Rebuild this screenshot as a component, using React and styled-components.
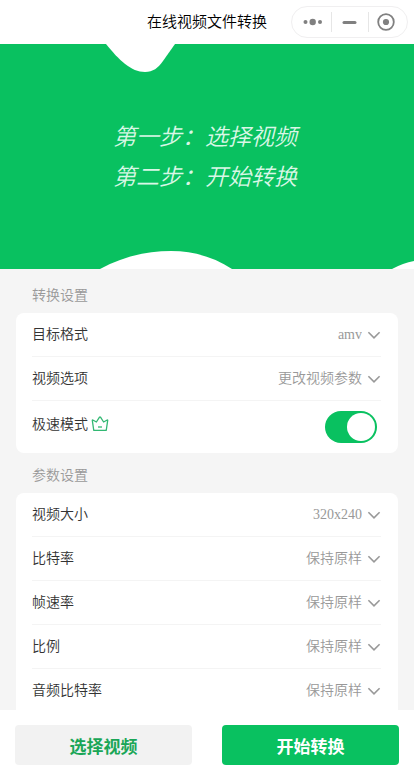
import React, { useState } from 'react';
import styled, { createGlobalStyle } from 'styled-components';

const convertList = [
  { id: 'format', label: '目标格式', value: 'amv' },
  { id: 'option', label: '视频选项', value: '更改视频参数' },
];

const paramList = [
  { id: 'size', label: '视频大小', value: '320x240' },
  { id: 'bitrate', label: '比特率', value: '保持原样' },
  { id: 'fps', label: '帧速率', value: '保持原样' },
  { id: 'ratio', label: '比例', value: '保持原样' },
  { id: 'audioBitrate', label: '音频比特率', value: '保持原样' },
];

const SelectRow = ({ id, label, value }) => (
  <Row>
    <Label htmlFor={id}>{label}</Label>
    <Select id={id} defaultValue={value}>
      <option value={value}>{value}</option>
    </Select>
    <Chevron viewBox="0 0 14 8" aria-hidden="true">
      <path d="M1.4 1.2L7 6.8L12.6 1.2" />
    </Chevron>
  </Row>
);

const App = () => {
  const [isFast, setIsFast] = useState(true);

  return (
    <Page>
      <GlobalStyle />
      <Header>
        <Title>在线视频文件转换</Title>
        <Capsule>
          <CapsuleButton type="button" aria-label="更多">
            <svg width="20" height="20" viewBox="0 0 20 20" fill="#808080">
              <circle cx="2.5" cy="10" r="2" />
              <circle cx="9.7" cy="10" r="3.2" />
              <circle cx="17" cy="10" r="2" />
            </svg>
          </CapsuleButton>
          <CapsuleButton type="button" aria-label="最小化">
            <svg width="20" height="20" viewBox="0 0 20 20" fill="#808080">
              <rect x="2.5" y="9" width="14" height="3" rx="1.5" />
            </svg>
          </CapsuleButton>
          <CapsuleButton type="button" aria-label="关闭">
            <svg width="20" height="20" viewBox="0 0 20 20" fill="#808080">
              <circle cx="9" cy="10" r="7.8" fill="none" stroke="#808080" strokeWidth="1.8" />
              <circle cx="9" cy="10" r="3.1" />
            </svg>
          </CapsuleButton>
        </Capsule>
      </Header>

      <Content>
        <Banner>
          <Wave viewBox="0 0 414 225" preserveAspectRatio="none" aria-hidden="true">
            <path d="M106 0C119 16 131 28 145 28C153 28 158 24 163 17L175 0Z" />
            <path d="M100 225C122 213 146 207 171 207C195 207 215 214 232 225Z" />
            <path d="M392 225Q403 219 414 217V225Z" />
          </Wave>
          <Step>第一步：选择视频</Step>
          <Step>第二步：开始转换</Step>
        </Banner>

        <GroupTitle>转换设置</GroupTitle>
        <Card>
          {convertList.map(v => (
            <SelectRow key={v.id} {...v} />
          ))}
          <Row $tall>
            <Name>
              <Label htmlFor="fast">极速模式</Label>
              <Crown viewBox="0 0 18 18" aria-hidden="true">
                <path d="M3 14.4Q2.8 14.4 2.7 14L1.3 4.4Q1.2 3.7 1.8 4L5.4 6L8.5 1.2Q9 .6 9.5 1.2L12.6 6L16.2 4Q16.8 3.7 16.7 4.4L15.3 14Q15.2 14.4 15 14.4Z" />
                <path d="M7 11h4" />
              </Crown>
            </Name>
            <Switch
              id="fast"
              type="checkbox"
              checked={isFast}
              onChange={e => setIsFast(e.target.checked)}
            />
          </Row>
        </Card>

        <GroupTitle>参数设置</GroupTitle>
        <Card $open>
          {paramList.map(v => (
            <SelectRow key={v.id} {...v} />
          ))}
        </Card>
      </Content>

      <Footer>
        <Button type="button">选择视频</Button>
        <Button type="button" $primary>
          开始转换
        </Button>
      </Footer>
    </Page>
  );
};

const GlobalStyle = createGlobalStyle`
  * {
    box-sizing: border-box;
  }
  body {
    margin: 0;
    background-color: #f5f5f5;
    font-family: 'Liberation Serif', 'Noto Sans CJK SC', sans-serif;
    font-weight: 350;
  }
  button,
  select {
    font-family: inherit;
    font-weight: inherit;
  }
`;

const Page = styled.div`
  display: flex;
  flex-direction: column;
  height: 100vh;
`;

const Header = styled.header`
  display: grid;
  grid-template-columns: 1fr auto 1fr;
  align-items: center;
  flex: none;
  height: 44px;
  padding: 0 6px;
  background-color: #fff;
`;

const Title = styled.h1`
  grid-column: 2;
  margin: 0;
  font-size: 15px;
  font-weight: inherit;
  line-height: 20px;
  color: #000;
`;

const Capsule = styled.div`
  display: flex;
  align-items: center;
  justify-self: end;
  height: 32px;
  padding: 0 2px;
  border: 1px solid #f0eff0;
  border-radius: 16px;
`;

const CapsuleButton = styled.button`
  display: flex;
  align-items: center;
  justify-content: center;
  width: 37px;
  height: 20px;
  padding: 0;
  border: none;
  background: transparent;
  & + & {
    border-left: 1px solid #e6e6e6;
  }
`;

const Content = styled.main`
  flex: 1;
  min-height: 0;
  overflow-y: auto;
  scrollbar-width: none;
`;

const Banner = styled.section`
  position: relative;
  display: flex;
  flex-direction: column;
  align-items: center;
  justify-content: center;
  height: 225px;
  margin-bottom: 4px;
  padding: 3px 4px 0 0;
  background-color: #09c160;
`;

const Wave = styled.svg`
  position: absolute;
  top: 0;
  left: 0;
  width: 100%;
  height: 100%;
  fill: #fff;
`;

const Step = styled.p`
  position: relative;
  margin: 0;
  font-size: 23px;
  font-style: italic;
  line-height: 40px;
  color: #d9f7e6;
`;

const GroupTitle = styled.h2`
  margin: 0;
  padding: 12px 32px 6px;
  font-size: 14px;
  font-weight: inherit;
  line-height: 22px;
  color: #999;
`;

const Card = styled.section`
  margin: 0 16px;
  padding: 0 17px 0 16px;
  border-radius: ${props => (props.$open ? '8px 8px 0 0' : '8px')};
  background-color: #fff;
`;

const Row = styled.div`
  display: flex;
  align-items: center;
  height: ${props => (props.$tall ? '52px' : '44px')};
  border-bottom: 1px solid #f4f4f4;
  &:last-child {
    border-bottom-color: transparent;
  }
`;

const Name = styled.div`
  display: flex;
  align-items: center;
  padding-bottom: 4px;
`;

const Label = styled.label`
  flex: none;
  font-size: 14px;
  line-height: 20px;
  color: #333;
`;

const Select = styled.select`
  flex: 1;
  min-width: 0;
  height: 24px;
  padding: 0;
  border: none;
  appearance: none;
  background: transparent;
  font-size: 14px;
  text-align: right;
  text-align-last: right;
  color: #999;
`;

const Chevron = styled.svg`
  flex: none;
  width: 14px;
  height: 8px;
  margin-left: 5px;
  fill: none;
  stroke: #999;
  stroke-width: 1.6;
`;

const Crown = styled.svg`
  width: 18px;
  height: 18px;
  margin-left: 3px;
  fill: none;
  stroke: #32b873;
  stroke-width: 1.3;
  stroke-linejoin: round;
`;

const Switch = styled.input`
  display: flex;
  align-items: center;
  width: 52px;
  height: 32px;
  margin: 0 4px 0 auto;
  padding: 0 2px;
  border-radius: 16px;
  appearance: none;
  background-color: ${props => (props.checked ? '#09c160' : '#dfdfdf')};
  &::after {
    content: '';
    width: 28px;
    height: 28px;
    margin-left: ${props => (props.checked ? 'auto' : '0')};
    border-radius: 50%;
    background-color: #fff;
  }
`;

const Footer = styled.footer`
  display: flex;
  flex: none;
  gap: 30px;
  padding: 15px;
  background-color: #fff;
`;

const Button = styled.button`
  flex: 1;
  height: 40px;
  border: none;
  border-radius: 4px;
  background-color: ${props => (props.$primary ? '#09c160' : '#f2f2f2')};
  font-size: 17px;
  font-weight: 700;
  color: ${props => (props.$primary ? '#fff' : '#1aa657')};
`;

export default App;
